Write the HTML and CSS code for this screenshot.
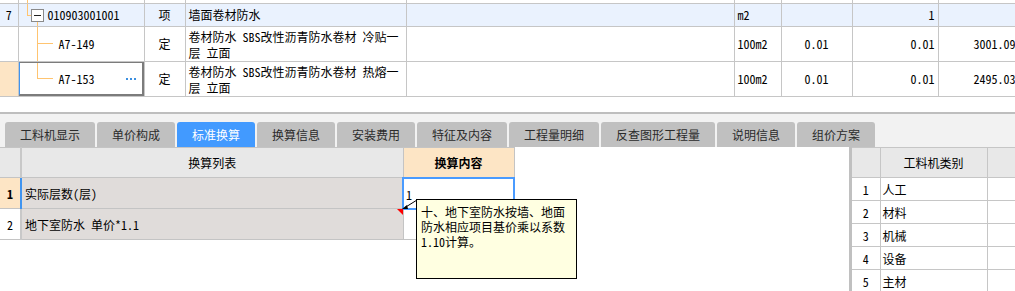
FILE: index.html
```html
<!DOCTYPE html>
<html lang="zh-CN">
<head>
  <meta charset="UTF-8">
  <title>标准换算</title>
  <link rel="stylesheet" href="styles.css">
</head>
<body>
  <!-- 清单 / 定额 -->
  <div class="top">
    <table class="grid">
      <colgroup>
        <col class="w-num"><col class="w-code"><col class="w-type"><col class="w-name"><col class="w-feat">
        <col class="w-unit"><col class="w-qty"><col class="w-amt"><col class="w-price">
      </colgroup>
      <tr class="cut">
        <td class="num"></td>
        <td class="code"><span class="ln up-full"></span></td>
        <td></td><td></td><td></td><td></td><td></td><td></td><td></td>
      </tr>
      <tr class="bill">
        <td class="num">7</td>
        <td class="code">
          <span class="ln up-half"></span><span class="ln stub"></span>
          <span class="fold"></span><span class="ln down-half"></span>
          <span class="code-text lvl1">010903001001</span>
        </td>
        <td class="mid">项</td>
        <td>墙面卷材防水</td>
        <td></td>
        <td>m2</td>
        <td></td>
        <td class="right">1</td>
        <td></td>
      </tr>
      <tr class="quota">
        <td class="num"></td>
        <td class="code">
          <span class="ln trunk"></span><span class="ln branch"></span>
          <span class="code-text lvl2">A7-149</span>
        </td>
        <td class="mid">定</td>
        <td class="wrap">卷材防水 SBS改性沥青防水卷材 冷贴一层 立面</td>
        <td></td>
        <td>100m2</td>
        <td class="mid">0.01</td>
        <td class="right">0.01</td>
        <td class="right">3001.09</td>
      </tr>
      <tr class="quota current">
        <td class="num"></td>
        <td class="code active">
          <span class="ln trunk-end"></span><span class="ln branch"></span>
          <span class="code-text lvl2">A7-153</span>
          <span class="more"></span>
        </td>
        <td class="mid">定</td>
        <td class="wrap">卷材防水 SBS改性沥青防水卷材 热熔一层 立面</td>
        <td></td>
        <td>100m2</td>
        <td class="mid">0.01</td>
        <td class="right">0.01</td>
        <td class="right">2495.03</td>
      </tr>
    </table>
  </div>

  <div class="splitter"></div>

  <div class="tabs">
    <span class="tab wide">工料机显示</span>
    <span class="tab">单价构成</span>
    <span class="tab on">标准换算</span>
    <span class="tab">换算信息</span>
    <span class="tab">安装费用</span>
    <span class="tab wide">特征及内容</span>
    <span class="tab wide">工程量明细</span>
    <span class="tab wider">反查图形工程量</span>
    <span class="tab">说明信息</span>
    <span class="tab">组价方案</span>
  </div>

  <div class="bottom">
    <div class="left-pane">
      <table class="conv">
        <colgroup><col class="w-cnum"><col class="w-list"><col class="w-val"></colgroup>
        <tr class="hd">
          <td></td>
          <td>换算列表</td>
          <td class="val-hd">换算内容</td>
        </tr>
        <tr class="sel">
          <td class="num">1</td>
          <td class="item">实际层数(层)</td>
          <td class="val editing">1</td>
        </tr>
        <tr>
          <td class="num">2</td>
          <td class="item noted">地下室防水 单价*1.1</td>
          <td class="val"></td>
        </tr>
      </table>

      <svg class="tip-arrow" width="20" height="14" viewBox="0 0 20 14">
        <line x1="17" y1="1" x2="5" y2="8.5" stroke="#000" stroke-width="1"/>
        <polygon points="2,10 7,6 8,10" fill="#000"/>
      </svg>
      <div class="tip">十、地下室防水按墙、地面<br>防水相应项目基价乘以系数<br>1.10计算。</div>
    </div>

    <div class="pane-bar"></div>

    <div class="right-pane">
      <table class="cat">
        <colgroup><col class="w-rnum"><col class="w-kind"><col class="w-rest"></colgroup>
        <tr class="hd"><td></td><td>工料机类别</td><td></td></tr>
        <tr><td class="num">1</td><td>人工</td><td></td></tr>
        <tr><td class="num">2</td><td>材料</td><td></td></tr>
        <tr><td class="num">3</td><td>机械</td><td></td></tr>
        <tr><td class="num">4</td><td>设备</td><td></td></tr>
        <tr><td class="num">5</td><td>主材</td><td></td></tr>
      </table>
    </div>
  </div>
</body>
</html>
```

FILE: styles.css
```css
* {
  margin: 0;
  padding: 0;
  box-sizing: border-box;
}

body {
  width: 1015px;
  height: 291px;
  overflow: hidden;
  background: #fff;
  font-family: "Noto Sans Mono CJK SC", "Noto Sans CJK SC", monospace;
  font-size: 12px;
  color: #000;
}

table {
  border-collapse: collapse;
  table-layout: fixed;
}

td {
  border: 1px solid #c6c6c6;
  padding: 0 3px;
  vertical-align: middle;
  white-space: nowrap;
  overflow: hidden;
  line-height: 15px;
}

.mid { text-align: center; }
.right { text-align: right; }
.num { text-align: center; }

/* ---- top grid ---- */
.top {
  height: 112px;
  overflow: hidden;
}

.grid { width: 1019px; }
.grid td:first-child { border-left: 0; }

.w-num { width: 18px; }
.w-code { width: 126px; }
.w-type { width: 41px; }
.w-name { width: 221px; }
.w-feat { width: 328px; }
.w-unit { width: 47px; }
.w-qty { width: 71px; }
.w-amt { width: 86px; }
.w-price { width: 81px; }

.cut { height: 3px; }
.cut td { border-top: 0; padding: 0; }

.bill { height: 23px; background: #eaf2fe; }
.quota { height: 33px; }

.grid .wrap {
  white-space: normal;
  vertical-align: top;
  padding-top: 2px;
  line-height: 16px;
  word-break: break-all;
}

.grid .right { padding-right: 3px; }

.code { position: relative; }

.code-text { display: block; }
.lvl1 { padding-left: 26px; }
.lvl2 { padding-left: 37px; }

.ln {
  position: absolute;
  background: #ffc470;
}
.up-full { left: 8px; top: 0; bottom: 0; width: 1px; }
.up-half { left: 8px; top: 0; height: 12px; width: 1px; }
.stub { left: 8px; top: 11px; width: 5px; height: 1px; }
.down-half { left: 18px; top: 18px; bottom: 0; width: 1px; }
.trunk { left: 18px; top: 0; bottom: 0; width: 1px; }
.trunk-end { left: 18px; top: 0; height: 17px; width: 1px; }
.branch { left: 18px; top: 16px; width: 16px; height: 1px; }

.fold {
  position: absolute;
  left: 12px;
  top: 5px;
  width: 13px;
  height: 13px;
  border: 1px solid #8a8a8a;
  background: #fff;
}
.fold::after {
  content: "";
  position: absolute;
  left: 2px;
  top: 5px;
  width: 7px;
  height: 1px;
  background: #222;
}

.current .num { background: #fde5c5; }

.active::after {
  content: "";
  position: absolute;
  inset: -1px 0 0 -1px;
  border: 2px solid #7c7c7c;
  border-left-color: #3f94f0;
}

.more {
  position: absolute;
  right: 8px;
  top: 16px;
  width: 10px;
  height: 2px;
  background: repeating-linear-gradient(to right, #3b8fe0 0 2px, transparent 2px 4px);
}

/* ---- splitter & tabs ---- */
.splitter {
  height: 2px;
  background: #bebebe;
}

.tabs {
  display: flex;
  gap: 2px;
  height: 33px;
  padding: 8px 0 0 5px;
  background: #f2f2f2;
  font-family: "Noto Sans CJK SC", sans-serif;
}

.tab {
  width: 78px;
  height: 25px;
  line-height: 25px;
  text-align: center;
  background: #c0c0c0;
  color: #2b2b2b;
  border-radius: 3px 3px 0 0;
}
.tab.wide { width: 90px; }
.tab.wider { width: 114px; }
.tab.on { background: #429aff; color: #fff; }

/* ---- bottom panes ---- */
.bottom {
  display: flex;
  height: 144px;
}

.left-pane {
  position: relative;
  width: 849px;
  overflow: hidden;
}

.conv { width: 514px; }
.conv td:first-child { border-left: 0; }
.conv td { border-color: #c4c4c4; }

.w-cnum { width: 21px; }
.w-list { width: 382px; }
.w-val { width: 111px; }

.conv .hd { height: 30px; background: #e8e8e8; text-align: center; }
.conv .hd td:first-child { border-right: 2px solid #c8c8c8; }
.conv .hd .val-hd { background: #fde5c5; font-weight: bold; }

.conv tr { height: 31px; }
.conv .item { background: #e0dcda; position: relative; }
.conv .sel .num { background: #fde5c5; font-weight: bold; border-right: 2px solid #3f94f0; }
.conv .num { border-right: 2px solid #c8c8c8; }

.conv .editing {
  border: 2px solid #4a9bff;
  padding-top: 3px;
  padding-left: 2px;
}

.noted::after {
  content: "";
  position: absolute;
  top: 0;
  right: 0;
  border-top: 6px solid #f00;
  border-left: 6px solid transparent;
}

.tip {
  position: absolute;
  left: 416px;
  top: 52px;
  width: 161px;
  height: 80px;
  padding: 4px 0 0 4px;
  background: #ffffe1;
  border: 1px solid #000;
  line-height: 15px;
}

.tip-arrow {
  position: absolute;
  left: 400px;
  top: 52px;
}

.pane-bar {
  width: 3px;
  background: #c0c0c0;
}

.right-pane {
  flex: 1;
  overflow: hidden;
}

.cat { width: 180px; }
.cat td:first-child { border-left: 0; }
.w-rnum { width: 28px; }
.w-kind { width: 107px; }
.w-rest { width: 45px; }

.cat .hd { height: 30px; background: #e8e8e8; }
.cat .hd td { text-align: center; }
.cat tr { height: 23px; }
.cat td { padding: 0 2px; }
```
